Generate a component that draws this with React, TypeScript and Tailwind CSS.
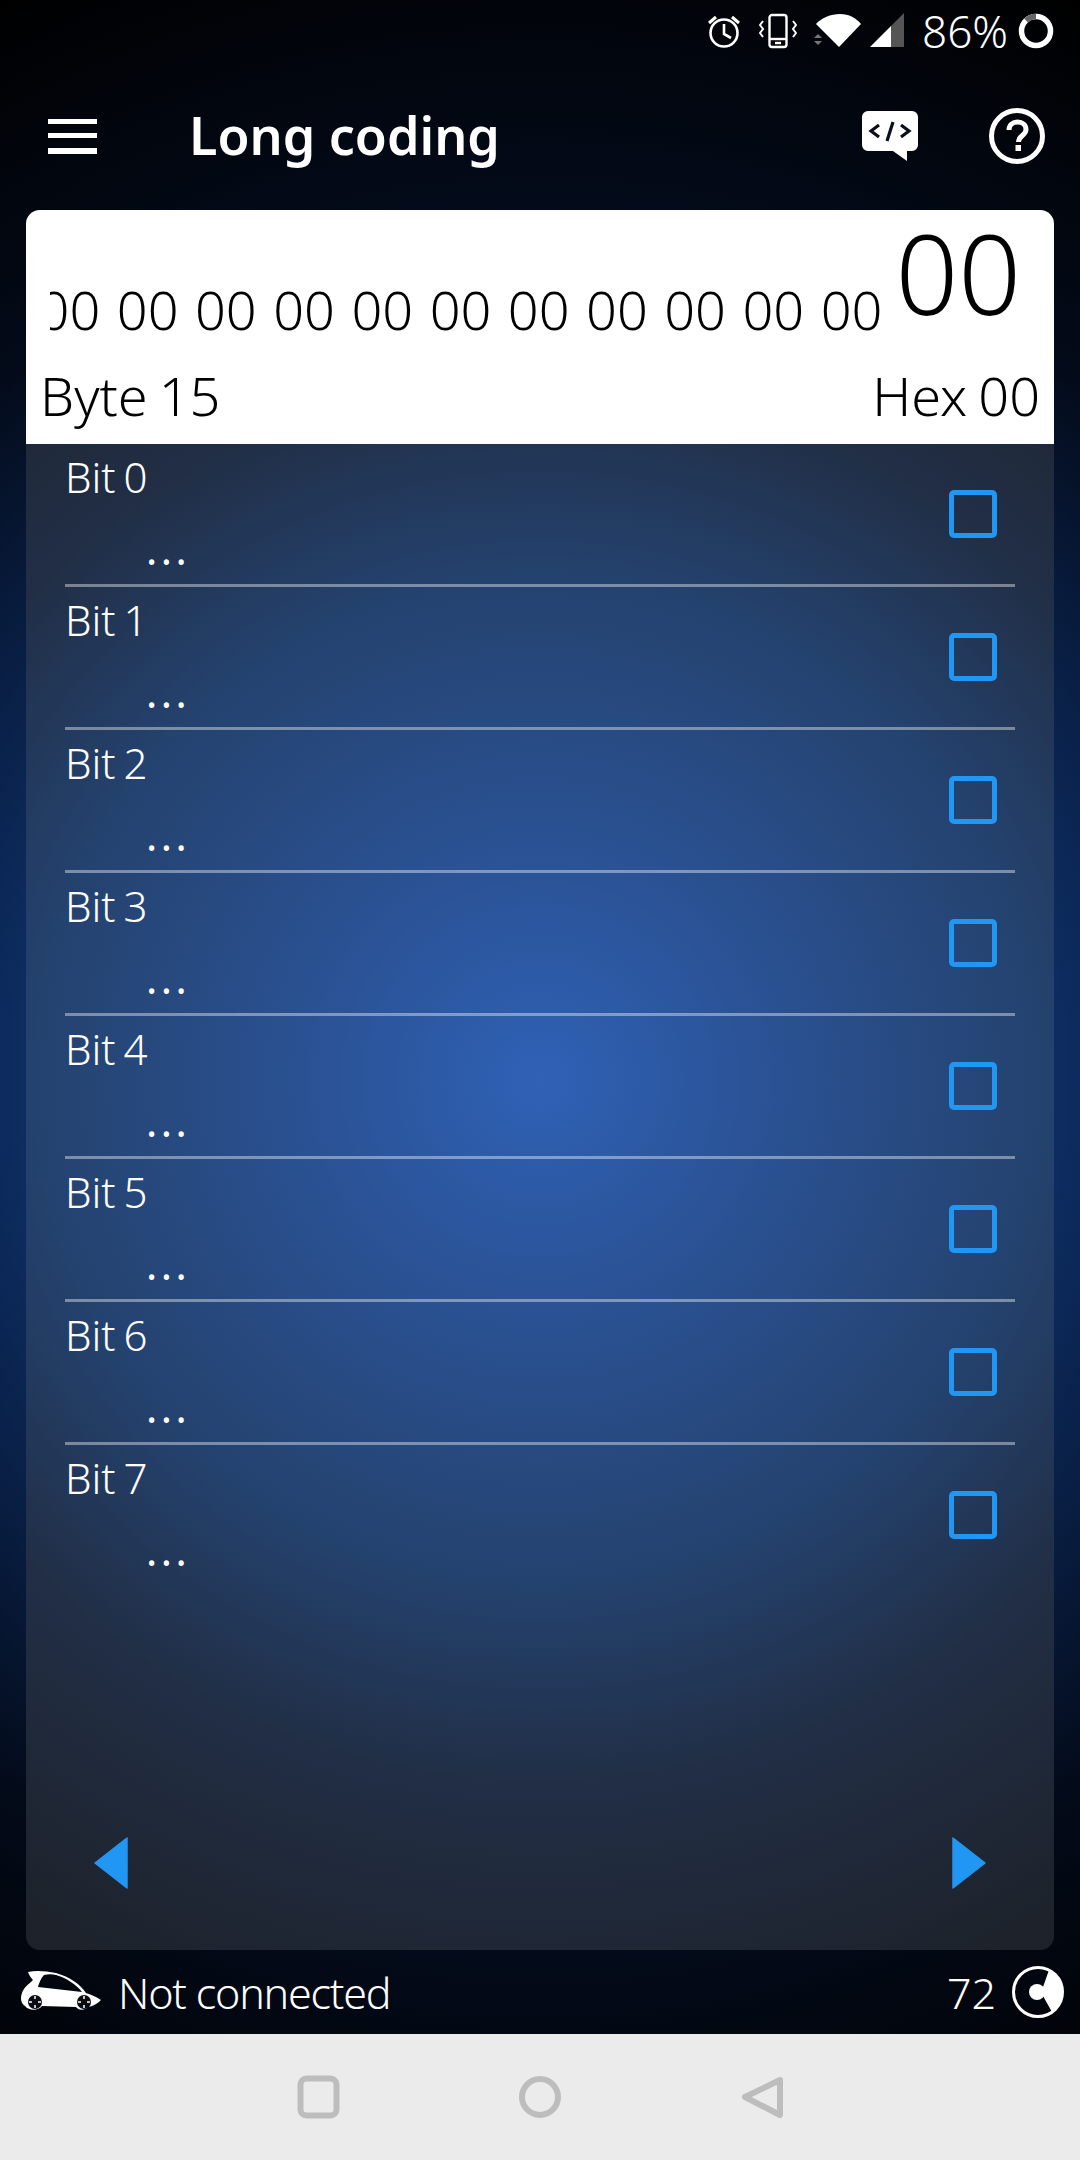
const F = '[font-family:"Noto_Sans",Lato,sans-serif]';

function Row({ n, last }: { n: number; last?: boolean }) {
  return (
    <div className="mx-[39px] flex h-[143px] items-center justify-between border-b-[3px] border-[#ffffff66] pb-[1px] pr-[18px] data-[last=true]:border-transparent" data-last={last ? 'true' : 'false'}>
      <div className="flex h-full flex-col text-white">
        <div className="mt-[7px] text-[42px] leading-[52px] font-light [word-spacing:-3px]">Bit {n}</div>
        <div className="ml-[81px] mt-[20px] text-[42px] leading-[52px] font-normal tracking-[3.5px]">...</div>
      </div>
      <div className="h-[48px] w-[48px] rounded-[5px] border-[5px] border-[#2196f3]" />
    </div>
  );
}

export default function App() {
  const bytes = Array.from({ length: 16 }, () => '00').join(' ');
  return (
    <div className={`flex h-[2160px] w-[1080px] flex-col overflow-hidden bg-[radial-gradient(circle_at_540px_1080px,#2f60b5_0%,#0c2a5c_45%,#030a18_74%,#000000_100%)] ${F}`}>
      {/* status bar */}
      <div className="flex h-[62px] items-center justify-end pr-[26px] text-white">
        <svg className="mr-[17px] h-[36px] w-[36px]" viewBox="0 0 36 36" fill="none" stroke="white" strokeWidth="2.6">
          <circle cx="18" cy="20" r="13.5" />
          <path d="M18 11v10l7 4" />
          <path d="M3 10l7-6M33 10l-7-6" strokeWidth="3" />
        </svg>
        <svg className="mr-[16px] h-[36px] w-[38px]" viewBox="0 0 38 36" fill="none" stroke="white" strokeWidth="2.4">
          <rect x="10.5" y="2" width="17" height="32" rx="2.5" />
          <path d="M10 26h18" />
          <path d="M16 30h6" />
          <path d="M4 8l-3 4 3 4-3 4 3 4M34 8l3 4-3 4 3 4-3 4" strokeWidth="2" />
        </svg>
        <svg className="mr-[6px] h-[36px] w-[50px]" viewBox="0 0 50 36">
          <path d="M3 11C8 5 18 1 27 1s16 4 21 10L26 34z" fill="white" />
          <path d="M1 25l4-4 4 4zM1 28l4 4 4-4z" fill="#777" />
        </svg>
        <svg className="mr-[17px] h-[36px] w-[36px]" viewBox="0 0 36 36">
          <path d="M1 34L22 13v21z" fill="white" />
          <path d="M22 13L35 0v34H22z" fill="#555" />
        </svg>
        <span className="mr-[10px] text-[44px] leading-none font-light">86%</span>
        <svg className="h-[36px] w-[36px]" viewBox="0 0 36 36" fill="none" strokeWidth="5.5">
          <circle cx="18" cy="18" r="14.5" stroke="white" />
          <path d="M18 3.500A14.500 14.500 0 0 0 8 7.500" stroke="#666" />
        </svg>
      </div>
      {/* header */}
      <div className="flex h-[148px] items-center pl-[48px] pr-[35px] text-white">
        <div className="flex h-[35px] w-[49px] flex-col justify-between">
          <div className="h-[5px] bg-white" />
          <div className="h-[5px] bg-white" />
          <div className="h-[6px] bg-white" />
        </div>
        <div className="ml-[92px] mb-[2px] flex-1 text-[52px] leading-none font-semibold">Long coding</div>
        <svg className="mr-[71px] h-[50px] w-[56px]" viewBox="0 0 56 50">
          <path d="M6 0h44a6 6 0 0 1 6 6v28a6 6 0 0 1-6 6h-5v10L31 40H6a6 6 0 0 1-6-6V6a6 6 0 0 1 6-6z" fill="white" />
          <path d="M17 14l-8 6 8 6M39 14l8 6-8 6M31 11l-6 19" fill="none" stroke="#0a0f1a" strokeWidth="3.2" />
        </svg>
        <svg className="h-[56px] w-[56px]" viewBox="0 0 56 56" fill="none">
          <circle cx="28" cy="28" r="25.5" stroke="white" strokeWidth="5" />
          <path d="M20 22c0-5 4-8 8.500-8 5 0 8.500 3 8.500 7.500 0 6-7.500 6-7.500 12.500" stroke="white" strokeWidth="5" />
          <rect x="26.500" y="37" width="5.500" height="6" fill="white" />
        </svg>
      </div>
      {/* card */}
      <div className="mx-[26px] flex h-[1740px] flex-col overflow-hidden rounded-[14px] bg-[radial-gradient(circle_at_514px_870px,#2f61b6_0%,#2a5192_24%,#24426e_50%,#212e45_70%,#1d2128_100%)]">
        <div className="flex h-[234px] flex-col bg-white text-black">
          <div className="flex h-[150px] items-start">
            <div className="ml-[24px] mr-[13px] mt-[52px] flex h-[95px] min-w-0 flex-1 justify-end overflow-hidden whitespace-nowrap text-[54px] leading-[95px] font-light [word-spacing:2.500px]">{bytes}</div>
            <div className="mr-[33px] mt-[6px] text-[110px] leading-[112px] font-light">00</div>
          </div>
          <div className="flex items-center justify-between pl-[14px] pr-[14px] text-[54px] leading-[70px] font-light [word-spacing:-3px]">
            <span>Byte 15</span>
            <span>Hex 00</span>
          </div>
        </div>
        <div>
          {[0, 1, 2, 3, 4, 5, 6].map((n) => (
            <Row key={n} n={n} />
          ))}
          <Row n={7} last />
        </div>
        <div className="mt-[248px] flex justify-between pl-[68px] pr-[68px]">
          <svg className="h-[54px] w-[34px]" viewBox="0 0 34 54"><path d="M33 2v50L1 27z" fill="#2196f3" stroke="#2196f3" strokeWidth="1.500" strokeLinejoin="round" /></svg>
          <svg className="h-[54px] w-[34px]" viewBox="0 0 34 54"><path d="M1 2v50l32-25z" fill="#2196f3" stroke="#2196f3" strokeWidth="1.500" strokeLinejoin="round" /></svg>
        </div>
      </div>
      {/* footer */}
      <div className="flex h-[84px] items-center pl-[17px] pr-[16px] text-white">
        <svg className="mr-[16px] h-[48px] w-[85px]" viewBox="7 8 85 48">
          <path fillRule="evenodd" d="M18 12C26 10 36 11 46 13C60 17 70 24 76 33C82 35 87 37 91 40C88 43 84 46 78 47C74 51 68 50 66 47L32 46C28 51 19 51 15 46C11 44 10 38 12 33C14 27 19 24 23 20C21 18 19 15 18 12ZM34 15C31 18 29 23 28 27L72 32C66 24 56 18 46 15C42 14 38 14 34 15Z" fill="white" />
          <circle cx="25" cy="42" r="7" fill="#0a0c12" />
          <circle cx="74" cy="42" r="7" fill="#0a0c12" />
          <path d="M25 36v3M25 45v3M19 42h3M28 42h3M74 36v3M74 45v3M68 42h3M77 42h3" stroke="white" strokeWidth="1.500" />
        </svg>
        <div className="flex-1 text-[43px] leading-none font-light tracking-[-1.200px]">Not connected</div>
        <div className="mr-[16px] text-[43px] leading-none font-light">72</div>
        <svg className="h-[52px] w-[52px]" viewBox="0 0 52 52">
          <circle cx="26" cy="26" r="24.500" fill="none" stroke="white" strokeWidth="3" />
          <path d="M37 4A25 25 0 0 1 40 46L31 30a8 8 0 0 1 0-9z" fill="white" />
          <circle cx="25" cy="26" r="8" fill="white" />
        </svg>
      </div>
      {/* nav */}
      <div className="flex h-[126px] items-center justify-center bg-[#ebebeb]">
        <svg className="h-[44px] w-[44px]" viewBox="0 0 44 44" fill="none"><rect x="4.500" y="3.500" width="36" height="37" rx="6" stroke="#bdbdbd" strokeWidth="6" /></svg>
        <svg className="ml-[178px] h-[44px] w-[44px]" viewBox="0 0 44 44" fill="none"><circle cx="22" cy="22" r="18" stroke="#bdbdbd" strokeWidth="6" /></svg>
        <svg className="ml-[179px] h-[44px] w-[44px]" viewBox="0 0 44 44" fill="none"><path d="M39 5L4 22l35 18z" stroke="#bdbdbd" strokeWidth="6" strokeLinejoin="round" /></svg>
      </div>
    </div>
  );
}
